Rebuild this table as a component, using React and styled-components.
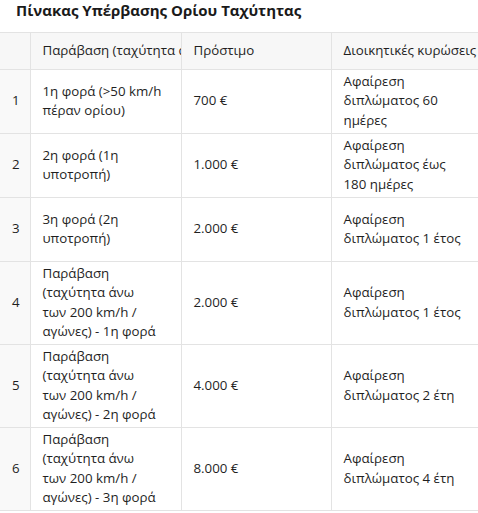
import React from "react";
import styled, { createGlobalStyle } from "styled-components";

const GlobalStyle = createGlobalStyle`
    html, body {
        margin: 0;
        padding: 0;
        background: #ffffff;
        overflow: hidden;
    }
    body {
        font-family: "Open Sans", "Noto Sans", "Liberation Sans", sans-serif;
        color: #1f1f1f;
    }
`;

const Page = styled.div`
    width: 478px;
    height: 513px;
    overflow: hidden;
`;

const Title = styled.h3`
    margin: 0;
    padding: 1px 0 0 16px;
    height: 32px;
    box-sizing: border-box;
    font-size: 15px;
    font-weight: 700;
    line-height: 19px;
    color: #1a1a1a;
`;

const Table = styled.table`
    border-collapse: collapse;
    table-layout: fixed;
    width: 640px;
    font-size: 13.3px;
    line-height: 19.5px;
`;

const HeadCell = styled.th`
    text-align: left;
    font-weight: 400;
    white-space: nowrap;
    overflow: hidden;
    padding: 8px 12px;
    height: 19px;
    background: #f7f7f7;
    border: 1px solid #e3e3e3;
    border-left: ${({ $first }) => ($first ? "none" : "1px solid #e3e3e3")};
`;

const Row = styled.tr`
    height: 64px;
`;

const Cell = styled.td`
    padding: 2px 12px;
    vertical-align: middle;
    white-space: nowrap;
    background: ${({ $index }) => ($index ? "#f9f9f9" : "#ffffff")};
    border: 1px solid #e3e3e3;
    border-left: ${({ $index }) => ($index ? "none" : "1px solid #e3e3e3")};
`;

const Line = styled.span`
    display: block;
`;

const columns = [
    { title: "", width: 30 },
    { title: "Παράβαση (ταχύτητα άνω του ορίου)", width: 151 },
    { title: "Πρόστιμο", width: 150 },
    { title: "Διοικητικές κυρώσεις", width: 160 },
    { title: "", width: 149 },
];

// each cell is a list of its lines, as they wrap in the narrow columns
const rows = [
    [["1"], ["1η φορά (>50 km/h", "πέραν ορίου)"], ["700 €"], ["Αφαίρεση", "διπλώματος 60", "ημέρες"]],
    [["2"], ["2η φορά (1η", "υποτροπή)"], ["1.000 €"], ["Αφαίρεση", "διπλώματος έως", "180 ημέρες"]],
    [["3"], ["3η φορά (2η", "υποτροπή)"], ["2.000 €"], ["Αφαίρεση", "διπλώματος 1 έτος"]],
    [["4"], ["Παράβαση", "(ταχύτητα άνω", "των 200 km/h /", "αγώνες) - 1η φορά"], ["2.000 €"], ["Αφαίρεση", "διπλώματος 1 έτος"]],
    [["5"], ["Παράβαση", "(ταχύτητα άνω", "των 200 km/h /", "αγώνες) - 2η φορά"], ["4.000 €"], ["Αφαίρεση", "διπλώματος 2 έτη"]],
    [["6"], ["Παράβαση", "(ταχύτητα άνω", "των 200 km/h /", "αγώνες) - 3η φορά"], ["8.000 €"], ["Αφαίρεση", "διπλώματος 4 έτη"]],
];

export default function App() {
    return (
        <Page>
            <GlobalStyle />
            <Title>Πίνακας Υπέρβασης Ορίου Ταχύτητας</Title>
            <Table>
                <colgroup>
                    {columns.map((col, i) => (
                        <col key={i} style={{ width: col.width }} />
                    ))}
                </colgroup>
                <thead>
                    <tr>
                        {columns.map((col, i) => (
                            <HeadCell key={i} $first={i === 0}>{col.title}</HeadCell>
                        ))}
                    </tr>
                </thead>
                <tbody>
                    {rows.map((row) => (
                        <Row key={row[0][0]}>
                            {row.map((lines, i) => (
                                <Cell key={i} $index={i === 0}>
                                    {lines.map((line, j) => (
                                        <Line key={j}>{line}</Line>
                                    ))}
                                </Cell>
                            ))}
                            <Cell />
                        </Row>
                    ))}
                </tbody>
            </Table>
        </Page>
    );
}
